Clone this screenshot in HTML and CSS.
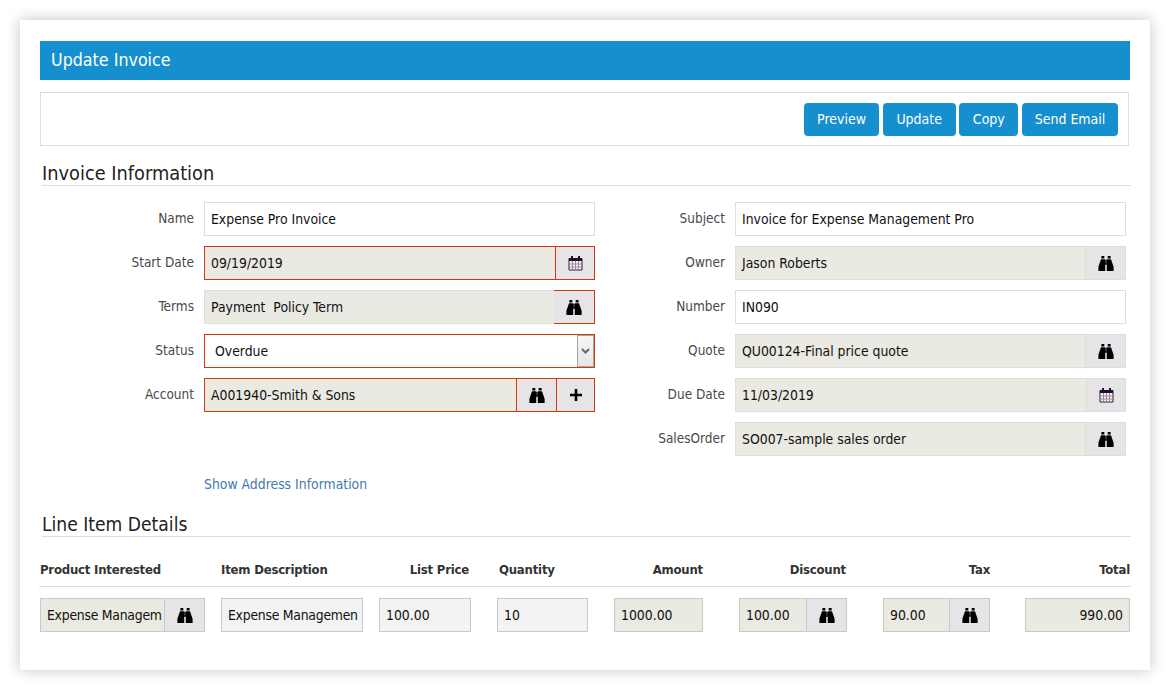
FILE: index.html
```html
<!DOCTYPE html>
<html lang="en">
<head>
<meta charset="utf-8">
<title>Update Invoice</title>
<link rel="stylesheet" href="styles.css">
</head>
<body>
<svg class="defs" width="0" height="0" aria-hidden="true">
  <symbol id="bino" viewBox="0 0 16 17">
    <path fill="#000" d="M3.400 1h2.900v2.400H3.400zM9.700 1h2.900v2.400H9.700zM3 4.200h4.200V16H.4v-4.300zM8.800 4.200H13l2.600 7.500V16H8.800zM7.200 5h1.600v4.800H7.200z"/>
    <path fill="#2f6f9f" d="M7.200 4.600h.5v4h-.5zM8.300 4.600h.5v4h-.5z"/>
  </symbol>
  <symbol id="cal" viewBox="0 0 15 16">
    <path fill="#f6eef2" stroke="#2a1a3a" d="M1 3.500h13v11.500H1z"/>
    <path fill="#1a1030" d="M1 3h13v3H1zM3 1h2v3H3zM10 1h2v3h-2z"/>
    <path fill="none" stroke="#a08a9a" d="M1.500 9h12M1.500 12h12M4.500 6v9M7.500 6v9M10.500 6v9"/>
  </symbol>
</svg>
<main class="card">
  <h1 class="title">Update Invoice</h1>
  <div class="toolbar">
    <button class="btn b1" type="button">Preview</button>
    <button class="btn b2" type="button">Update</button>
    <button class="btn b3" type="button">Copy</button>
    <button class="btn b4" type="button">Send Email</button>
  </div>

  <h2 class="section first">Invoice Information</h2>
  <div class="form">
    <div class="col">
      <div class="row"><span class="lbl">Name</span><div class="field white"><span class="val">Expense Pro Invoice</span></div></div>
      <div class="row"><span class="lbl">Start Date</span><div class="field ro err"><span class="val">09/19/2019</span><span class="ib ib-cal"><svg class="i-cal"><use href="#cal"/></svg></span></div></div>
      <div class="row"><span class="lbl">Terms</span><div class="field ro errbtn"><span class="val">Payment&nbsp; Policy Term</span><span class="ib"><svg class="i-bino"><use href="#bino"/></svg></span></div></div>
      <div class="row"><span class="lbl">Status</span><div class="field white err"><span class="val pad-select">Overdue</span><span class="arrow"><svg width="9" height="6" viewBox="0 0 9 6"><path d="M1 1l3.500 3.500L8 1" fill="none" stroke="#666" stroke-width="2"/></svg></span></div></div>
      <div class="row"><span class="lbl">Account</span><div class="field ro err"><span class="val">A001940-Smith &amp; Sons</span><span class="ib"><svg class="i-bino"><use href="#bino"/></svg></span><span class="ib ib-plus"><svg width="12" height="12" viewBox="0 0 12 12"><path d="M0 4.700h4.700V0h2.600v4.700H12v2.600H7.300V12H4.700V7.300H0z"/></svg></span></div></div>
    </div>
    <div class="col right">
      <div class="row"><span class="lbl">Subject</span><div class="field white"><span class="val">Invoice for Expense Management Pro</span></div></div>
      <div class="row"><span class="lbl">Owner</span><div class="field ro"><span class="val">Jason Roberts</span><span class="ib"><svg class="i-bino"><use href="#bino"/></svg></span></div></div>
      <div class="row"><span class="lbl">Number</span><div class="field white"><span class="val">IN090</span></div></div>
      <div class="row"><span class="lbl">Quote</span><div class="field ro"><span class="val">QU00124-Final price quote</span><span class="ib"><svg class="i-bino"><use href="#bino"/></svg></span></div></div>
      <div class="row"><span class="lbl">Due Date</span><div class="field ro"><span class="val">11/03/2019</span><span class="ib ib-cal"><svg class="i-cal"><use href="#cal"/></svg></span></div></div>
      <div class="row"><span class="lbl">SalesOrder</span><div class="field ro"><span class="val">SO007-sample sales order</span><span class="ib"><svg class="i-bino"><use href="#bino"/></svg></span></div></div>
    </div>
  </div>
  <a class="addr" href="#">Show Address Information</a>

  <h2 class="section second">Line Item Details</h2>
  <div class="thead">
    <div class="c c1">Product Interested</div>
    <div class="c c2">Item Description</div>
    <div class="c c3 end">List Price</div>
    <div class="c c4 q">Quantity</div>
    <div class="c c5 end">Amount</div>
    <div class="c c6 end">Discount</div>
    <div class="c c7 end">Tax</div>
    <div class="c c8 end">Total</div>
  </div>
  <div class="tbody">
    <div class="c c1"><div class="field line ro"><span class="val tight">Expense Managem</span><span class="ib ib-s"><svg class="i-bino"><use href="#bino"/></svg></span></div></div>
    <div class="c c2"><div class="field line soft"><span class="val tight">Expense Managemen</span></div></div>
    <div class="c c3"><div class="field line soft"><span class="val">100.00</span></div></div>
    <div class="c c4"><div class="field line soft"><span class="val">10</span></div></div>
    <div class="c c5"><div class="field line ro"><span class="val">1000.00</span></div></div>
    <div class="c c6"><div class="field line ro"><span class="val">100.00</span><span class="ib ib-s"><svg class="i-bino"><use href="#bino"/></svg></span></div></div>
    <div class="c c7"><div class="field line ro"><span class="val">90.00</span><span class="ib ib-s"><svg class="i-bino"><use href="#bino"/></svg></span></div></div>
    <div class="c c8"><div class="field line ro"><span class="val right-val">990.00</span></div></div>
  </div>
</main>
</body>
</html>
```
FILE: styles.css
```css
* { box-sizing: border-box; }
html, body { margin: 0; height: 690px; background: #fff; overflow: hidden; }
body {
  font-family: "DejaVu Sans Condensed", "DejaVu Sans", sans-serif;
  font-stretch: condensed;
  font-size: 13.850px;
  color: #111;
}
.defs { position: absolute; }
.card {
  margin: 20px;
  width: 1130px;
  height: 650px;
  padding: 21px 20px 0;
  background: #fff;
  box-shadow: 0 0 14px rgba(0, 0, 0, .24);
}
.title {
  margin: 0;
  height: 39px;
  padding-left: 11px;
  background: #168fcf;
  color: #fff;
  font-size: 17.700px;
  font-weight: 400;
  line-height: 38px;
}
.toolbar {
  display: flex;
  justify-content: flex-end;
  align-items: center;
  gap: 3.670px;
  margin: 12px 1px 0 0;
  height: 54px;
  padding-right: 10px;
  border: 1px solid #ddd;
}
.btn {
  height: 33px;
  padding: 0;
  border: 0;
  border-radius: 4px;
  background: #168fcf;
  color: #fff;
  font: inherit;
  font-size: 14px;
}
.b1 { width: 75px; }
.b2 { width: 73px; }
.b3 { width: 59px; }
.b4 { width: 96px; }
.section {
  margin: 0 -1px 0 2px;
  border-bottom: 1px solid #ddd;
  font-weight: 400;
  color: #222;
  height: 26px;
}
.section.first { margin-top: 14px; font-size: 19.800px; line-height: 28px; }
.section.second { margin-top: 18px; height: 27px; line-height: 30px; font-size: 19.100px; }
.form {
  display: flex;
  margin-top: 16px;
}
.col { width: 555px; display: flex; flex-direction: column; gap: 10px; }
.right { width: 531px; }
.row { display: flex; align-items: center; gap: 10px; height: 34px; }
.lbl { flex: 1; text-align: right; color: #4a4a4a; font-size: 13.500px; position: relative; top: -1px; }
.field {
  flex: none;
  display: flex;
  width: 391px;
  height: 34px;
  border: 1px solid #ddd;
  align-items: stretch;
}
.white { background: #fff; border-width: 1.500px; }
.ro { background: #eae9e2; }
.soft { background: #f3f3f3; }
.val {
  flex: 1;
  min-width: 0;
  padding-left: 6px;
  line-height: 32px;
  white-space: nowrap;
}
.tight { letter-spacing: -.25px; }
.right-val { text-align: right; padding: 0 6px 0 0; }
.pad-select { padding-left: 10px; }
.ib {
  flex: none;
  width: 40px;
  display: flex;
  align-items: center;
  justify-content: center;
  background: #e6e4e6;
  border-left: 1px solid #ddd;
}
.ib-cal { width: 39px; }
.ib-plus { width: 38px; }
.i-bino { width: 16px; height: 17px; }
.i-cal { width: 15px; height: 16px; }
.err { border-color: #cf3a0c; }
.err .ib { border-left-color: #cf3a0c; }
.errbtn .ib {
  margin: -1px -1px -1px 0;
  width: 41px;
  border: 1px solid #cf3a0c;
  border-left: 0;
}
.arrow {
  flex: none;
  width: 17px;
  margin: 0 0 0 1px;
  display: flex;
  align-items: center;
  justify-content: center;
  background: linear-gradient(#f6f6f6, #e6e6e6);
  border: 1px solid #a5a5a5;
}
.addr {
  display: block;
  margin: 20px 0 0 164px;
  height: 16px;
  line-height: 16px;
  color: #4378b0;
  text-decoration: none;
}
.thead, .tbody { display: flex; margin: 0 -1px; padding: 0 1px; }
.thead {
  height: 50px;
  align-items: flex-end;
  padding-bottom: 9px;
  border-bottom: 1px solid #ddd;
  font-weight: 700;
  color: #333;
  font-size: 13px;
  letter-spacing: -.2px;
}
.tbody { margin-top: 11px; }
.c { flex: none; }
.c1 { width: 165px; }
.c2 { width: 142px; margin-left: 16px; }
.c3 { width: 90px; margin-left: 16px; }
.c4 { width: 91px; margin-left: 28px; }
.c5 { width: 89px; margin-left: 26px; }
.c6 { width: 107px; margin-left: 36px; }
.c7 { width: 107px; margin-left: 37px; }
.c8 { width: 105px; margin-left: 35px; }
.thead .q { padding-left: 2px; }
.end { text-align: right; }
.tbody .c3 { width: 92px; }
.tbody .c4 { margin-left: 26px; }
.tbody .c6 { width: 108px; }
.tbody .c7 { margin-left: 36px; }
.line { width: 100%; border-color: #c9c9c9; }
.ib-s { border-left-color: #c9c9c9; }
```
